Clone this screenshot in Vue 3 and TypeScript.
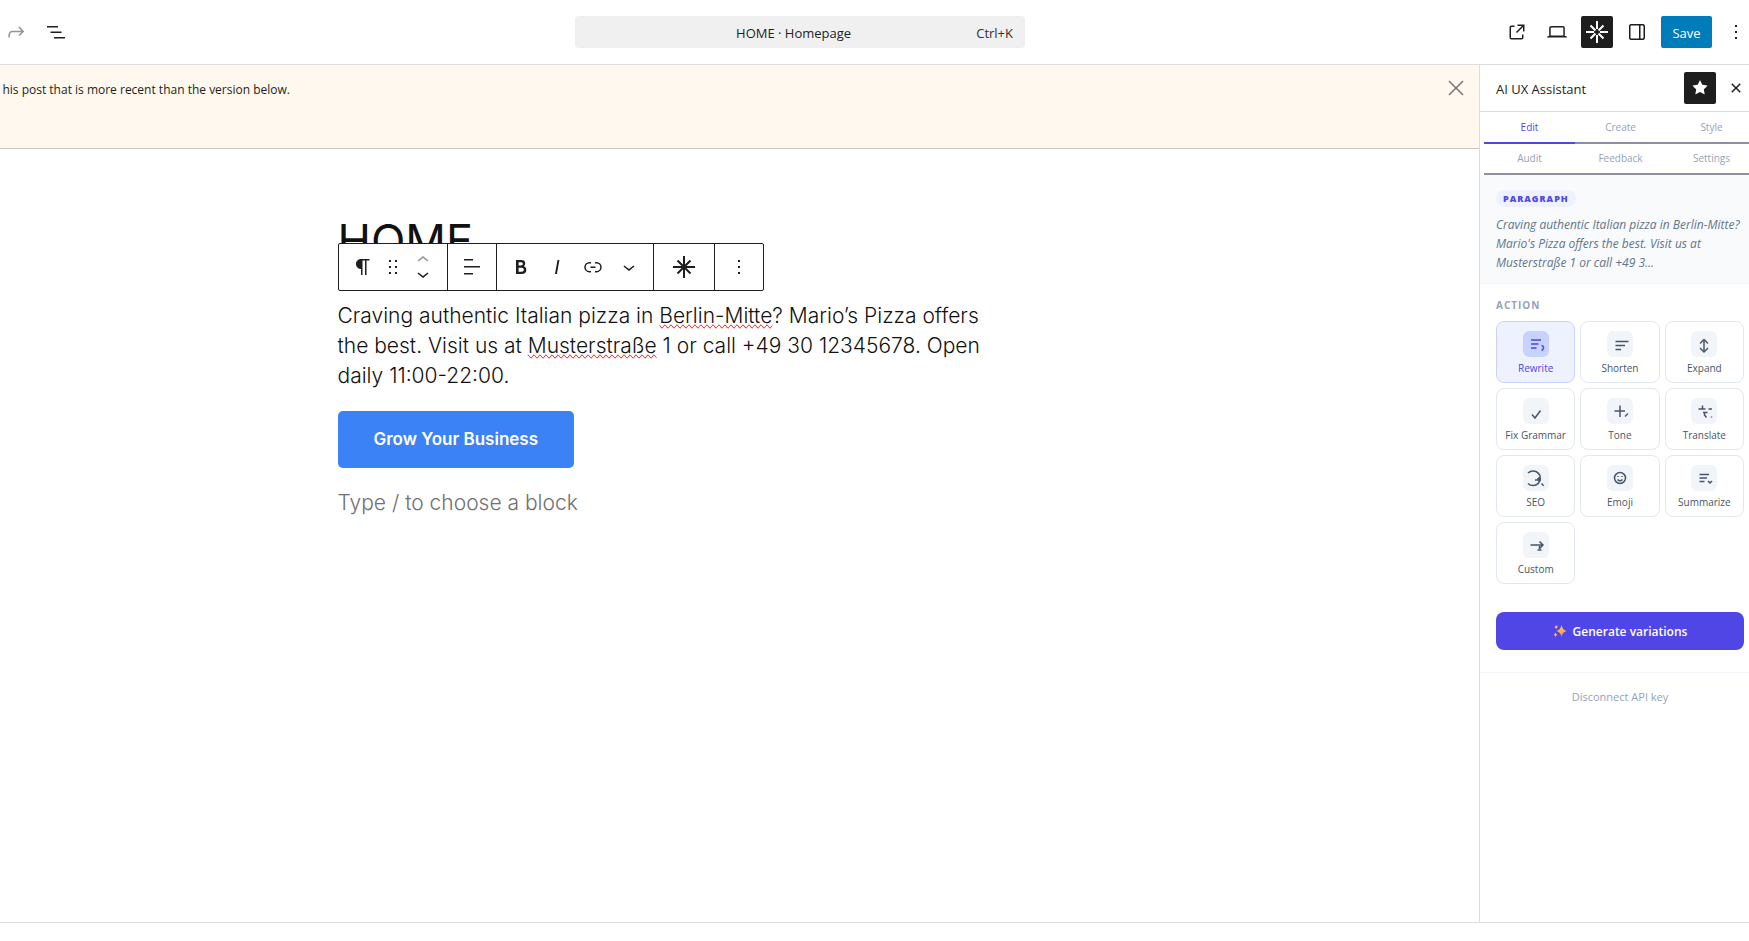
<script setup lang="ts">
import { ref } from 'vue'

interface Action {
  label: string
  paths: string[]
}

const tabs: string[] = ['Edit', 'Create', 'Style', 'Audit', 'Feedback', 'Settings']
const activeTab = ref('Edit')
const activeAction = ref('Rewrite')

const actions: Action[] = [
  { label: 'Rewrite', paths: ['M8 9h10M8 13h7.5M8 17h5.500', 'M18.500 14.500q2.500 .5 2 2.500t-2 2.500'] },
  { label: 'Shorten', paths: ['M8.500 10.500h13M8.500 14.500h9.500M8.500 18.500h5.500'] },
  { label: 'Expand', paths: ['M13 9v12', 'M9 12.500l4-4 4 4M9 17l4 4 4-4'] },
  { label: 'Fix Grammar', paths: ['M9 16.500l3 3.500 5.500-7.500'] },
  { label: 'Tone', paths: ['M7.500 13h10.500M13 7.500v11.500', 'M18 18.500l3-3'] },
  { label: 'Translate', paths: ['M7.500 11h7M11.500 7.500v3.500M17.500 11h3.500', 'M12 14.500h4.500M13.500 14.500v2.500l2 2.500M20.500 18.500v1'] },
  { label: 'SEO', paths: ['M5 8a7.300 7.300 0 1 1 0 10.500', 'M12 15h6M16 12v5.500M14 14h4M18.500 18.500l2.200 2.200'] },
  { label: 'Emoji', paths: ['M13 7.500a5.500 5.500 0 1 0 0 11a5.500 5.500 0 1 0 0-11z', 'M11 11v1M15 11v1M10.500 14.500q2.500 2.500 5 0'] },
  { label: 'Summarize', paths: ['M8.500 9.500h9.500M8.500 13h7.500M8.500 16.500h5', 'M17 16l2 2 2-2'] },
  { label: 'Custom', paths: ['M7.500 13h12M16.500 9.500l3.500 3.500-3.500 3.500', 'M14.500 18h4M16.500 14v3'] },
]
</script>

<template>
  <div class="viewport">
    <div class="editor">
      <header class="topbar">
        <div class="tools">
          <button class="icon-btn faded" aria-label="Redo">
            <svg viewBox="0 0 24 24"><path d="M15.6 6.5l-1.1 1 2.900 3.300H8c-.9 0-1.700.3-2.300.9-1.400 1.500-1.400 4.200-1.400 5.600v.2h1.500v-.3c0-1.100 0-3.500 1-4.500.3-.3.7-.5 1.300-.5h9.200L14.500 15l1.100 1.100 4.600-4.600-4.600-5z" /></svg>
          </button>
          <button class="icon-btn" aria-label="Document overview">
            <svg viewBox="0 0 24 24"><path d="M3 6h11v1.500H3V6Zm3.500 5.500h11V13h-11v-1.500ZM21 17H10v1.500h11V17Z" /></svg>
          </button>
        </div>
        <button class="command">
          <span class="command-title">HOME · Homepage</span>
          <span class="command-key">Ctrl+K</span>
        </button>
        <div class="settings">
          <button class="icon-btn" aria-label="View page">
            <svg viewBox="0 0 24 24"><path d="M19.500 4.500h-7V6h4.440l-5.970 5.970 1.060 1.060L18 7.060v4.440h1.500v-7Zm-13 1a2 2 0 0 0-2 2v10a2 2 0 0 0 2 2h10a2 2 0 0 0 2-2v-3H17v3a.5.5 0 0 1-.5.5h-10a.5.5 0 0 1-.5-.5v-10a.5.5 0 0 1 .5-.5h3V5.500h-3Z" /></svg>
          </button>
          <button class="icon-btn" aria-label="Preview">
            <svg viewBox="0 0 24 24"><path d="M20.500 16h-.7V8c0-1.100-.9-2-2-2H6.200c-1.100 0-2 .9-2 2v8h-.7c-.8 0-1.500.7-1.500 1.500h20c0-.8-.7-1.500-1.500-1.500zM5.700 8c0-.3.2-.5.5-.5h11.600c.3 0 .5.2.5.5v7.600H5.700V8z" /></svg>
          </button>
          <button class="icon-btn dark" aria-label="Design tools">
            <svg viewBox="0 0 24 24" class="burst"><path d="M12 1v8M12 15v8M1 12h8M15 12h8M5.500 5.500l5 5M13.500 13.500l5 5M18.500 5.500l-5 5M10.500 13.500l-5 5" /></svg>
          </button>
          <button class="icon-btn" aria-label="Settings panel">
            <svg viewBox="0 0 24 24"><path d="M18 4H6c-1.100 0-2 .9-2 2v12c0 1.100.9 2 2 2h12c1.100 0 2-.9 2-2V6c0-1.100-.9-2-2-2zm-4 14.500H6c-.3 0-.5-.2-.5-.5V6c0-.3.2-.5.5-.5h8v13zm4.500-.5c0 .3-.2.5-.5.5h-2.500v-13H18c.3 0 .5.2.5.5v12z" /></svg>
          </button>
          <button class="save">Save</button>
          <button class="icon-btn" aria-label="Options">
            <svg viewBox="0 0 24 24"><path d="M13 19h-2v-2h2v2zm0-6h-2v-2h2v2zm0-6h-2V5h2v2z" /></svg>
          </button>
        </div>
      </header>

      <div class="body">
        <main class="canvas">
          <div class="notice">
            <p class="notice-text">his post that is more recent than the version below.</p>
            <button class="notice-close" aria-label="Dismiss">
              <svg viewBox="0 0 24 24"><path d="m13.060 12 6.470-6.470-1.060-1.060L12 10.940 5.530 4.470 4.470 5.530 10.940 12l-6.470 6.470 1.060 1.060L12 13.060l6.470 6.470 1.060-1.060L13.060 12Z" /></svg>
            </button>
          </div>

          <article class="post">
            <h1>HOME</h1>
            <div class="toolbar" role="toolbar" aria-label="Block tools">
              <div class="group first">
                <button aria-label="Paragraph"><svg viewBox="0 0 24 24"><path d="m9.996 14v-.225l.004 0v6.225h1.500v-14.500h2.500v14.500h1.500v-14.500h3v-1.500h-8.504c-2.761 0-5 2.239-5 5 0 2.761 2.239 5 5 5z" /></svg></button>
                <button class="narrow" aria-label="Drag"><svg viewBox="0 0 24 24"><path d="M8 7h2V5H8v2zm0 6h2v-2H8v2zm0 6h2v-2H8v2zm6-14v2h2V5h-2zm0 8h2v-2h-2v2zm0 6h2v-2h-2v2z" /></svg></button>
                <div class="mover">
                  <button class="faded" aria-label="Move up"><svg viewBox="0 0 24 24"><path d="M6.500 12.400L12 8l5.500 4.400-.9 1.200L12 10l-4.500 3.600-1-1.200z" /></svg></button>
                  <button aria-label="Move down"><svg viewBox="0 0 24 24"><path d="M17.500 11.600L12 16l-5.500-4.400.9-1.200L12 14l4.500-3.600 1 1.200z" /></svg></button>
                </div>
              </div>
              <div class="group">
                <button aria-label="Align text"><svg viewBox="0 0 24 24"><path d="M13 5.500H4V4h9v1.500Zm7 7H4V11h16v1.500Zm-7 7H4V18h9v1.500Z" /></svg></button>
              </div>
              <div class="group formats">
                <button aria-label="Bold"><svg viewBox="0 0 24 24"><path d="M14.700 11.300c1-.6 1.500-1.600 1.500-3 0-2.300-1.300-3.400-4-3.400H7v14h5.800c1.400 0 2.500-.3 3.300-1 .8-.7 1.200-1.700 1.200-2.900.1-1.900-.8-3.100-2.600-3.700zm-5.100-4h2.300c.6 0 1.100.1 1.400.4.3.3.5.7.5 1.200s-.2 1-.5 1.200c-.3.3-.8.4-1.400.4H9.600V7.300zm4.600 9c-.4.3-1 .4-1.700.4H9.600v-3.900h2.900c.7 0 1.300.2 1.700.5.4.3.6.8.6 1.500s-.2 1.200-.6 1.500z" /></svg></button>
                <button aria-label="Italic"><svg viewBox="0 0 24 24"><path d="M12.500 5L10 19h1.900l2.500-14z" /></svg></button>
                <button aria-label="Link"><svg viewBox="0 0 24 24"><path d="M10 17.389H8.444A5.194 5.194 0 1 1 8.444 7H10v1.500H8.444a3.694 3.694 0 0 0 0 7.389H10v1.500ZM14 7h1.556a5.194 5.194 0 0 1 0 10.390H14v-1.500h1.556a3.694 3.694 0 0 0 0-7.390H14V7Zm-4.500 6h5v-1.500h-5V13Z" /></svg></button>
                <button aria-label="More formats"><svg viewBox="0 0 24 24"><path d="M17.500 11.600L12 16l-5.500-4.400.9-1.200L12 14l4.500-3.600 1 1.200z" /></svg></button>
              </div>
              <div class="group wide">
                <button aria-label="AI assistant"><svg viewBox="0 0 24 24" class="burst"><path d="M12 1v22M1 12h22M5.500 5.500l13 13M18.500 5.500l-13 13" /></svg></button>
              </div>
              <div class="group">
                <button aria-label="Options"><svg viewBox="0 0 24 24"><path d="M13 19h-2v-2h2v2zm0-6h-2v-2h2v2zm0-6h-2V5h2v2z" /></svg></button>
              </div>
            </div>
            <p class="copy">
              Craving authentic Italian pizza in <span class="typo">Berlin-Mitte</span>? Mario’s Pizza offers<br />
              the best. Visit us at <span class="typo">Musterstraße</span> 1 or call +49 30 12345678. Open<br />
              daily 11:00-22:00.
            </p>
            <a class="cta" href="#">Grow Your Business</a>
            <p class="placeholder">Type / to choose a block</p>
          </article>
        </main>

        <aside class="sidebar">
          <div class="side-head">
            <h2>AI UX Assistant</h2>
            <button class="icon-btn dark" aria-label="Unpin">
              <svg viewBox="0 0 24 24"><path d="M11.776 4.454a.25.25 0 01.448 0l2.069 4.192a.25.25 0 00.188.137l4.626.672a.25.25 0 01.139.426l-3.348 3.263a.25.25 0 00-.072.222l.79 4.607a.25.25 0 01-.362.263l-4.138-2.175a.25.25 0 00-.232 0l-4.138 2.175a.25.25 0 01-.363-.263l.79-4.607a.25.25 0 00-.071-.222L4.754 9.881a.25.25 0 01.139-.426l4.626-.672a.25.25 0 00.188-.137l2.069-4.192z" /></svg>
            </button>
            <button class="icon-btn" aria-label="Close">
              <svg viewBox="0 0 24 24"><path d="M12 13.060l3.712 3.713 1.061-1.060L13.061 12l3.712-3.712-1.060-1.060L12 10.938 8.288 7.227l-1.061 1.060L10.939 12l-3.712 3.712 1.060 1.061L12 13.061z" /></svg>
            </button>
          </div>
          <div class="tabs" role="tablist">
            <button
              v-for="tab in tabs"
              :key="tab"
              role="tab"
              :aria-selected="tab === activeTab"
              :class="{ active: tab === activeTab }"
              @click="activeTab = tab"
            >{{ tab }}</button>
          </div>
          <section class="context">
            <span class="badge">PARAGRAPH</span>
            <p>Craving authentic Italian pizza in Berlin-Mitte?<br />Mario's Pizza offers the best. Visit us at<br />Musterstraße 1 or call +49 3...</p>
          </section>
          <section class="action-panel">
            <h3>ACTION</h3>
            <div class="actions">
              <button
                v-for="action in actions"
                :key="action.label"
                class="action"
                :class="{ selected: action.label === activeAction }"
                @click="activeAction = action.label"
              >
                <svg viewBox="0 0 26 26"><path v-for="d in action.paths" :key="d" :d="d" /></svg>
                <span>{{ action.label }}</span>
              </button>
            </div>
            <button class="generate">
              <svg viewBox="0 0 14 14">
                <defs>
                  <linearGradient id="spark" x1="0" y1="0" x2="0" y2="1">
                    <stop offset="0" stop-color="#fcd34d" />
                    <stop offset="1" stop-color="#fb8a4c" />
                  </linearGradient>
                </defs>
                <path fill="url(#spark)" d="M8.500 1q.8 4.800 5.300 6-4.500 1.200-5.300 6-.8-4.800-5.300-6 4.500-1.200 5.300-6z" />
                <path fill="#fdba74" d="M3.200 .8q.4 1.800 2 2.200-1.600.4-2 2.200-.4-1.800-2-2.200 1.600-.4 2-2.200zM2.500 8.500q.4 1.800 2 2.200-1.600.4-2 2.200-.4-1.800-2-2.200 1.600-.4 2-2.200z" />
              </svg>
              <span>Generate variations</span>
            </button>
          </section>
          <div class="side-foot">
            <button>Disconnect API key</button>
          </div>
        </aside>
      </div>
      <footer class="crumbs"></footer>
    </div>
  </div>
</template>

<style>
html,
body {
  background: #fff;
  overflow: hidden;
}
</style>

<style scoped>
.viewport {
  height: 100vh;
  overflow: hidden;
  font-family: 'Open Sans', 'Noto Sans', sans-serif;
  font-size: 13px;
  color: #1e1e1e;
}

.viewport * {
  box-sizing: border-box;
}

.editor {
  display: flex;
  flex-direction: column;
  height: 100%;
  margin-right: -11px;
}

button {
  margin: 0;
  padding: 0;
  border: 0;
  background: none;
  color: inherit;
  font: inherit;
  cursor: pointer;
}

svg {
  display: block;
  width: 24px;
  height: 24px;
  fill: currentColor;
}

h1,
h2,
h3,
p {
  margin: 0;
}

.burst {
  fill: none;
  stroke: currentColor;
  stroke-width: 2;
}

.topbar {
  display: grid;
  grid-template-columns: calc(50% - 301px) 450px 1fr;
  align-items: center;
  flex: none;
  height: 65px;
  padding-right: 8px;
  border-bottom: 1px solid #ddd;
}

.tools,
.settings {
  display: flex;
  align-items: center;
  gap: 8px;
}

.settings {
  justify-content: flex-end;
}

.icon-btn {
  display: flex;
  align-items: center;
  justify-content: center;
  flex: none;
  width: 32px;
  height: 32px;
  border-radius: 2px;
}

.dark {
  background: #1e1e1e;
  color: #fff;
}

.faded {
  color: #949494;
}

.command {
  display: flex;
  align-items: center;
  height: 32px;
  padding: 2px 12px 0;
  border-radius: 4px;
  background: #f0f0f0;
}

.command-title {
  flex: 1;
  padding-left: 24px;
}

.command-key {
  color: #2f2f2f;
}

.save {
  width: 51px;
  height: 32px;
  padding-top: 2px;
  border-radius: 2px;
  background: #007cba;
  color: #fff;
}

.body {
  display: flex;
  flex: 1;
  min-height: 0;
}

.canvas {
  flex: 1;
  min-width: 0;
}

.notice {
  display: flex;
  justify-content: space-between;
  align-items: flex-start;
  height: 84px;
  padding: 11px 11px 0 0;
  border-bottom: 1px solid #c9c4ba;
  background: #fef8ee;
}

.notice-text {
  width: 290px;
  font-size: 12px;
  line-height: 28px;
  text-align: right;
  white-space: nowrap;
}

.notice-close {
  color: #757575;
}

.post {
  width: 804px;
  max-width: 100%;
  margin: 0 auto;
  padding-top: 67px;
  font-family: Inter, 'Open Sans', sans-serif;
  font-weight: 300;
  color: #111;
}

h1 {
  height: 27px;
  font-size: 45px;
  font-weight: 400;
  line-height: 50px;
}

.toolbar {
  position: relative;
  display: flex;
  width: max-content;
  height: 48px;
  border: 1px solid #1e1e1e;
  border-radius: 2px;
  background: #fff;
  color: #1e1e1e;
}

.group {
  display: flex;
  align-items: center;
  justify-content: center;
  width: 49px;
  border-right: 1px solid #1e1e1e;
}

.group:last-child {
  width: 48px;
  border-right: 0;
}

.first {
  width: 109px;
}

.first > button {
  display: flex;
  justify-content: center;
  width: 36px;
}

.first > .narrow {
  width: 24px;
}

.mover {
  display: flex;
  flex-direction: column;
  align-items: center;
  width: 36px;
}

.mover button {
  display: flex;
  align-items: center;
  height: 14px;
}

.formats {
  gap: 12px;
  width: 157px;
}

.wide {
  width: 61px;
}

.copy {
  margin-top: 10px;
  font-size: 21px;
  line-height: 30px;
  white-space: nowrap;
}

.typo {
  text-decoration-line: spelling-error;
}

.cta {
  display: block;
  width: max-content;
  margin-top: 20px;
  padding: 0 36px;
  border-radius: 5px;
  background: #3b82f6;
  color: #fff;
  font-size: 17px;
  font-weight: 600;
  line-height: 57px;
  text-decoration: none;
}

.placeholder {
  margin-top: 20px;
  font-size: 21px;
  line-height: 30px;
  color: #707070;
}

.sidebar {
  flex: none;
  width: 281px;
  border-left: 1px solid #ddd;
  background: #fff;
}

.side-head {
  display: flex;
  align-items: center;
  gap: 4px;
  height: 47px;
  padding: 0 8px 0 16px;
  border-bottom: 1px solid #ddd;
}

.side-head h2 {
  flex: 1;
  padding-top: 2px;
  font-size: 13px;
  font-weight: 400;
}

.tabs {
  display: grid;
  grid-template-columns: repeat(3, 1fr);
  padding: 1px 3px 0 4px;
}

.tabs button {
  height: 31px;
  padding-bottom: 2px;
  border-bottom: 2px solid #8f8da3;
  color: #94a3b8;
  font-size: 10px;
  font-weight: 500;
}

.tabs .active {
  border-bottom-color: #4f46e5;
  color: #4f46e5;
}

.context {
  padding: 15px 16px 11px;
  border-bottom: 1px solid #f1f5f9;
  background: #f8fafc;
}

.badge {
  display: block;
  width: max-content;
  padding: 0 7px;
  border-radius: 9px;
  background: #eef2ff;
  color: #4f46e5;
  font-size: 9px;
  font-weight: 800;
  letter-spacing: 1px;
  line-height: 17px;
}

.context p {
  margin-top: 8px;
  color: #64748b;
  font-size: 12px;
  font-style: italic;
  line-height: 19px;
  white-space: nowrap;
}

.action-panel {
  padding: 14px 16px 22px;
  border-bottom: 1px solid #f1f5f9;
}

h3 {
  color: #94a3b8;
  font-size: 10px;
  font-weight: 700;
  letter-spacing: 1px;
  line-height: 15px;
}

.actions {
  display: grid;
  grid-template-columns: repeat(3, 1fr);
  gap: 5px;
  margin-top: 8px;
}

.action {
  display: flex;
  flex-direction: column;
  align-items: center;
  gap: 4px;
  height: 62px;
  padding-top: 9px;
  border: 1px solid #e2e8f0;
  border-radius: 8px;
  color: #475569;
  font-size: 10px;
  font-weight: 500;
  line-height: 15px;
  white-space: nowrap;
}

.action svg {
  width: 26px;
  height: 26px;
  border-radius: 6px;
  background: #f1f5f9;
  fill: none;
  stroke: currentColor;
  stroke-width: 1.5;
}

.selected {
  border-color: #c7d2fe;
  background: #eef2ff;
  color: #4f46e5;
}

.selected svg {
  background: #c7d2fe;
}

.generate {
  display: flex;
  align-items: center;
  justify-content: center;
  gap: 6px;
  width: 100%;
  height: 38px;
  margin-top: 28px;
  border-radius: 8px;
  background: #4f46e5;
  color: #fff;
  font-size: 12px;
  font-weight: 600;
}

.generate svg {
  width: 14px;
  height: 14px;
}

.side-foot {
  display: flex;
  justify-content: center;
  padding-top: 15px;
  color: #94a3b8;
  font-size: 11px;
  line-height: 17px;
}

.crumbs {
  flex: none;
  height: 19px;
  border-top: 1px solid #ddd;
}
</style>
